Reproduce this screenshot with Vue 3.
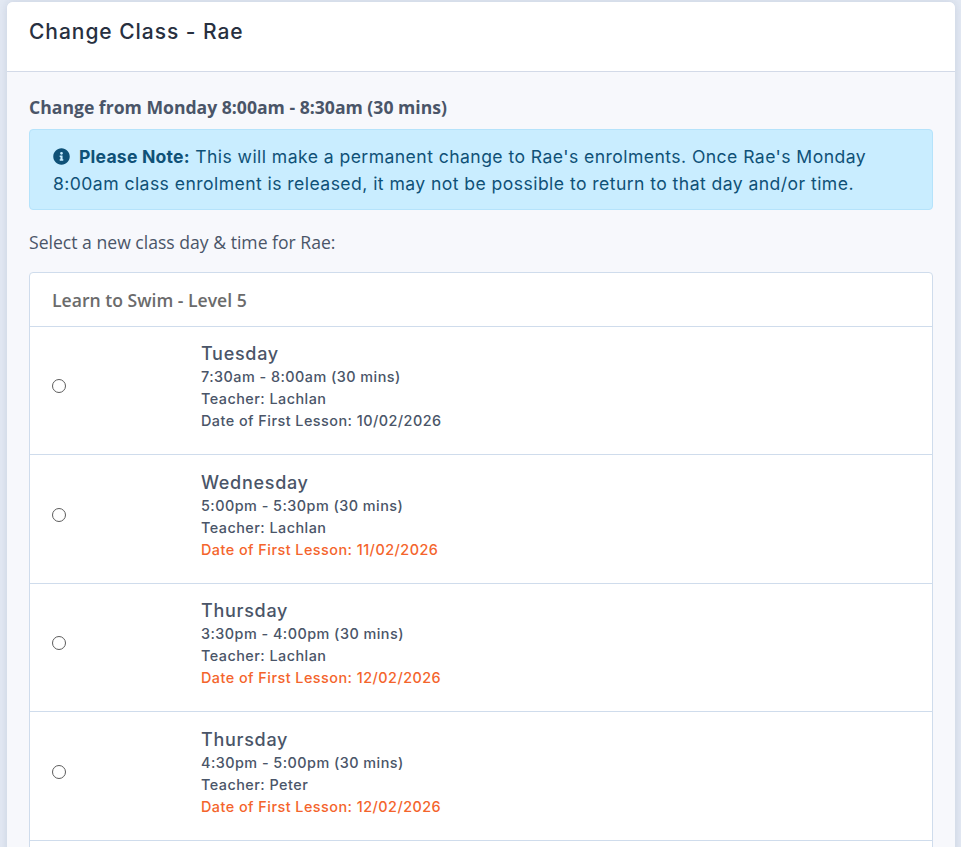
<template>
  <div class="page">
    <div class="modal">
      <div class="modal-head">
        <h2 class="modal-title">Change Class - Rae</h2>
      </div>

      <div class="modal-body">
        <p class="from-line">Change from Monday 8:00am - 8:30am (30 mins)</p>

        <div class="note">
          <svg class="note-icon" viewBox="0 0 512 512" aria-hidden="true">
            <path d="M256 8C119 8 8 119 8 256s111 248 248 248 248-111 248-248S393 8 256 8zm0 110a42 42 0 1 1 0 84 42 42 0 0 1 0-84zm56 254c0 7-5 12-12 12h-88c-7 0-12-5-12-12v-24c0-7 5-12 12-12h12v-64h-12c-7 0-12-5-12-12v-24c0-7 5-12 12-12h64c7 0 12 5 12 12v100h12c7 0 12 5 12 12v24z" />
          </svg>
          <strong>Please Note:</strong> This will make a permanent change to Rae's enrolments. Once Rae's Monday 8:00am class enrolment is released, it may not be possible to return to that day and/or time.
        </div>

        <p class="select-line">Select a new class day &amp; time for Rae:</p>

        <div class="class-list">
          <div class="list-head">Learn to Swim - Level 5</div>
          <label v-for="opt in options" :key="opt.id" class="option">
            <input v-model="picked" class="option-radio" type="radio" name="new-class" :value="opt.id" />
            <span class="option-info">
              <span class="option-day">{{ opt.day }}</span>
              <span class="option-line">{{ opt.time }}</span>
              <span class="option-line">Teacher: {{ opt.teacher }}</span>
              <span class="option-line" :class="{ 'is-late': opt.late }">Date of First Lesson: {{ opt.first }}</span>
            </span>
          </label>
        </div>
      </div>
    </div>
  </div>
</template>

<script setup>
import { ref } from 'vue'

const picked = ref(null)

const options = [
  { id: 1, day: 'Tuesday', time: '7:30am - 8:00am (30 mins)', teacher: 'Lachlan', first: '10/02/2026', late: false },
  { id: 2, day: 'Wednesday', time: '5:00pm - 5:30pm (30 mins)', teacher: 'Lachlan', first: '11/02/2026', late: true },
  { id: 3, day: 'Thursday', time: '3:30pm - 4:00pm (30 mins)', teacher: 'Lachlan', first: '12/02/2026', late: true },
  { id: 4, day: 'Thursday', time: '4:30pm - 5:00pm (30 mins)', teacher: 'Peter', first: '12/02/2026', late: true }
]
</script>

<style>
html, body {
  margin: 0;
  height: 100%;
  overflow: hidden;
  background: #e3e9f3;
}
</style>

<style scoped>
.page {
  height: 847px;
  overflow: hidden;
  padding: 2px 6px 0 7px;
  box-sizing: border-box;
  background: #e3e9f3;
}
.modal {
  background: #f7f8fc;
  border-radius: 6px 6px 0 0;
  box-shadow: 0 0 10px rgba(90, 110, 150, 0.2);
  min-height: 860px;
}
.modal-head {
  height: 70px;
  box-sizing: border-box;
  padding: 17px 22px 0;
  background: #fff;
  border-radius: 6px 6px 0 0;
  border-bottom: 1px solid #d3dae8;
}
.modal-title {
  margin: 0;
  font-family: Inter, "Noto Sans", sans-serif;
  font-size: 21px;
  line-height: 26px;
  font-weight: 500;
  letter-spacing: 0.95px;
  color: #27303f;
}
.modal-body {
  padding: 24px 22px 0;
}
.from-line {
  margin: 0 0 11px;
  font-family: "Open Sans", sans-serif;
  font-size: 17.6px;
  line-height: 22px;
  font-weight: 700;
  color: #4a5568;
}
.note {
  height: 81px;
  box-sizing: border-box;
  padding: 13px 23px 0;
  background: #c9edff;
  border: 1px solid #b5e3fb;
  border-radius: 4px;
  font-family: Inter, "Noto Sans", sans-serif;
  font-size: 17.6px;
  line-height: 27px;
  letter-spacing: 0.43px;
  color: #0f5177;
}
.note strong {
  font-weight: 700;
  letter-spacing: 0.2px;
}
.note-icon {
  width: 17px;
  height: 17px;
  margin-right: 9px;
  vertical-align: -2px;
  fill: #0f5177;
}
.select-line {
  margin: 20px 0 18px;
  font-family: "Open Sans", sans-serif;
  font-size: 17.6px;
  line-height: 24px;
  color: #4a5568;
}
.class-list {
  padding-bottom: 40px;
  background: #fff;
  border: 1px solid #cfdcec;
  border-radius: 4px;
}
.list-head {
  height: 53.8px;
  box-sizing: border-box;
  padding: 15px 22px 0;
  border-bottom: 1px solid #cfdcec;
  font-family: "Open Sans", sans-serif;
  font-size: 17.6px;
  line-height: 24px;
  font-weight: 600;
  color: #6b6b6b;
}
.option {
  display: grid;
  grid-template-columns: 149px 1fr;
  align-items: center;
  padding: 15px 22px 22px;
  border-bottom: 1px solid #cfdcec;
  box-sizing: border-box;
  height: 128.5px;
}
.option-radio {
  appearance: none;
  width: 14px;
  height: 14px;
  margin: 0 0 2px;
  box-sizing: border-box;
  background: #fff;
  border: 1px solid #5c5c5c;
  border-radius: 50%;
}
.option-info {
  display: flex;
  flex-direction: column;
  font-family: Inter, "Noto Sans", sans-serif;
  color: #4a5568;
}
.option-day {
  font-size: 18px;
  line-height: 24px;
  font-weight: 500;
  letter-spacing: 0.7px;
}
.option-line {
  font-size: 14.4px;
  line-height: 22px;
  font-weight: 500;
  letter-spacing: 0.47px;
}
.is-late {
  color: #f4642c;
}
</style>
